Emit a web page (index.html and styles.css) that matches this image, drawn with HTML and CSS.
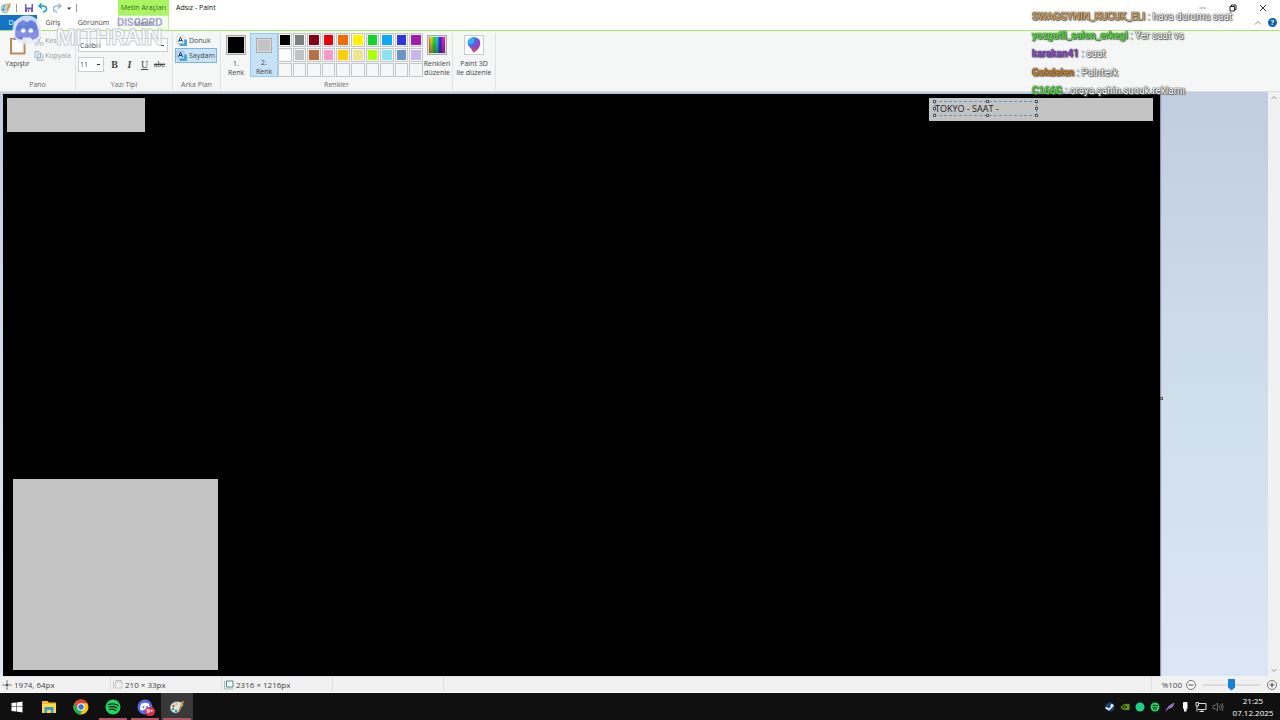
FILE: index.html
```html
<!DOCTYPE html>
<html lang="tr">
<head>
  <meta charset="UTF-8">
  <title>Adsız - Paint</title>
  <link rel="stylesheet" href="styles.css">
</head>
<body>
  <header class="titlebar">
    <div class="quick">
      <svg class="i12" viewBox="0 0 24 24"><path d="M3 8Q11 1 19 6Q23 10 17 14Q18 21 9 22Q0 20 3 8" fill="#b9d8dc" stroke="#6f8d92"/><circle cx="8" cy="9" r="2" fill="#4faf48"/><circle cx="7" cy="15" r="2" fill="#35b"/><path d="M12 16L19 2l3 1-7 14z" fill="#e39a31"/></svg>
      <span class="bar"></span>
      <button aria-label="Kaydet"><svg class="i10" viewBox="0 0 20 20"><path d="M2 2h16v16H2z" fill="#7557b5"/><path d="M5 2h10v7H5zM6 13h8v5H6z" fill="#fff"/><path d="M8 14h2v4H8z" fill="#7557b5"/></svg></button>
      <button aria-label="Geri al"><svg class="i10" viewBox="0 0 20 20"><path d="M7 1L2 6l6 5M2 6h8q7 0 7 6 0 5-7 6" fill="none" stroke="#1d9bd1" stroke-width="3"/></svg></button>
      <button aria-label="Yinele"><svg class="i10" viewBox="0 0 20 20"><path d="M13 1l5 5-6 5M18 6h-8q-7 0-7 6 0 5 7 6" fill="none" stroke="#9dbccc" stroke-width="3"/></svg></button>
      <button aria-label="Özelleştir"><svg class="i6" viewBox="0 0 10 10"><path d="M2 4h7L5 8z" fill="#333"/></svg></button>
      <span class="bar"></span>
    </div>
    <div class="context-tab">Metin Araçları</div>
    <h1>Adsız - Paint</h1>
    <div class="window-buttons">
      <button aria-label="Simge durumuna küçült"><svg class="i8" viewBox="0 0 16 16"><path d="M1 8h13" stroke="#999" stroke-width="2"/></svg></button>
      <button aria-label="Önceki boyut"><svg class="i8" viewBox="0 0 16 16"><path d="M2 5h9v9H2zM5 5V2h9v9h-3" fill="none" stroke="#222" stroke-width="2"/></svg></button>
      <button aria-label="Kapat"><svg class="i8" viewBox="0 0 16 16"><path d="M2 2l12 12M14 2L2 14" stroke="#333" stroke-width="2"/></svg></button>
    </div>
  </header>

  <nav class="tabs">
    <button class="file-tab">Dosya</button>
    <button>Giriş</button>
    <button>Görünüm</button>
    <button class="active">Metin</button>
    <div class="help">
      <svg class="i8" viewBox="0 0 16 16"><path d="M2 11l6-6 6 6" fill="none" stroke="#888" stroke-width="2"/></svg>
      <button class="help-btn" aria-label="Yardım">?</button>
    </div>
  </nav>

  <section class="ribbon">
    <div class="group pano">
      <div class="group-body">
        <button class="big paste">
          <svg class="i20" viewBox="0 0 40 40"><path d="M4 6h31v33H4z" fill="#b98a54"/><path d="M8 9h23v26H8z" fill="#fcfcfc"/><path d="M12 3h16v7H12z" fill="#8b929b"/></svg>
          <span>Yapıştır</span>
        </button>
        <div class="stack">
          <button class="small off"><svg class="i10" viewBox="0 0 20 20"><path d="M5 2l8 12M14 2L7 14" stroke="#b6bcc2" stroke-width="2"/><circle cx="5" cy="16" r="3" fill="none" stroke="#b6bcc2" stroke-width="2"/><circle cx="15" cy="16" r="3" fill="none" stroke="#b6bcc2" stroke-width="2"/></svg>Kes</button>
          <button class="small off"><svg class="i10" viewBox="0 0 20 20"><path d="M2 1h8l3 3v10H2zM7 6h8l3 3v10H7z" fill="#eef3f6" stroke="#a5b5c2" stroke-width="2"/><path d="M10 12h5M10 15h5" stroke="#a5b5c2"/></svg>Kopyala</button>
        </div>
      </div>
      <div class="group-name">Pano</div>
    </div>

    <div class="group font">
      <div class="group-body font-body">
        <select class="family" aria-label="Yazı tipi ailesi"><option>Calibri</option></select>
        <div class="row">
          <select class="size" aria-label="Yazı tipi boyutu"><option>11</option></select>
          <button class="b" aria-label="Kalın">B</button>
          <button class="i" aria-label="İtalik">I</button>
          <button class="u" aria-label="Altı çizili">U</button>
          <button class="s" aria-label="Üstü çizili">abc</button>
        </div>
      </div>
      <div class="group-name">Yazı Tipi</div>
    </div>

    <div class="group back">
      <div class="group-body stack">
        <button class="small"><svg class="i12" viewBox="0 0 24 24"><path d="M7 9h15v13H7z" fill="#46a8e0"/><path d="M2 2h14v15H2z" fill="#fff" stroke="#9aa8b3"/><path d="M5 14L9 4l4 10M6 11h6" fill="none" stroke="#1c3b6e" stroke-width="2"/></svg>Donuk</button>
        <button class="small on"><svg class="i12" viewBox="0 0 24 24"><path d="M7 9h15v13H7z" fill="#46a8e0"/><path d="M2 2h14v15H2z" fill="#bfe0f7" stroke="#7fa5c0"/><path d="M5 14L9 4l4 10M6 11h6" fill="none" stroke="#1c3b6e" stroke-width="2"/></svg>Saydam</button>
      </div>
      <div class="group-name">Arka Plan</div>
    </div>

    <div class="group colors">
      <div class="group-body">
        <button class="big pick"><span class="well black"></span><span>1.<br>Renk</span></button>
        <button class="big pick on"><span class="well gray"></span><span>2.<br>Renk</span></button>
        <div class="palette" id="palette"></div>
        <button class="big edit">
          <span class="well rainbow"></span><span>Renkleri<br>düzenle</span>
        </button>
      </div>
      <div class="group-name">Renkler</div>
    </div>

    <div class="group paint3d">
      <div class="group-body">
        <button class="big">
          <svg class="i20 framed" viewBox="0 0 40 40"><defs><linearGradient id="drop" x1="0" y1="0" x2="1" y2="1"><stop offset="0" stop-color="#18b7ef"/><stop offset=".5" stop-color="#6a55dc"/><stop offset="1" stop-color="#f0306b"/></linearGradient></defs><path d="M20 3C11 3 6 9 6 16c0 9 11 11 12 21 8-3 16-12 16-21 0-7-5-13-14-13z" fill="url(#drop)"/><path d="M16 25q5 2 7 7l-4 4q0-6-3-11" fill="#f2453a"/><path d="M20 3C11 3 6 9 6 16q8 4 14-2z" fill="#2fb4ee"/></svg>
          <span>Paint 3D<br>ile düzenle</span>
        </button>
      </div>
    </div>
  </section>

  <main class="work">
    <div class="canvas">
      <div class="shape top-left"></div>
      <div class="shape top-right"></div>
      <div class="shape bottom-left"></div>
      <div class="text-frame">
        <input type="text" value="TOKYO - SAAT -" aria-label="Metin">
        <i class="h nw"></i><i class="h n"></i><i class="h ne"></i>
        <i class="h w"></i><i class="h e"></i>
        <i class="h sw"></i><i class="h s"></i><i class="h se"></i>
      </div>
      <i class="h grip"></i>
    </div>
    <div class="scrollbar">
      <svg class="i8" viewBox="0 0 16 16"><path d="M3 10l5-5 5 5" fill="none" stroke="#999" stroke-width="2"/></svg>
      <svg class="i8" viewBox="0 0 16 16"><path d="M3 6l5 5 5-5" fill="none" stroke="#999" stroke-width="2"/></svg>
    </div>
  </main>

  <footer class="status">
    <div class="cell"><svg class="i10" viewBox="0 0 20 20"><path d="M10 1v18M1 10h18" stroke="#555" stroke-width="2" stroke-dasharray="4 3"/><path d="M10 6v8M6 10h8" stroke="#555" stroke-width="2"/></svg>1974, 64px</div>
    <div class="cell"><svg class="i10" viewBox="0 0 20 20"><path d="M5 4h13v12H5z" fill="none" stroke="#777" stroke-dasharray="2 1"/><path d="M1 3v14M5 1h13" stroke="#85898e"/></svg>210 × 33px</div>
    <div class="cell"><svg class="i10" viewBox="0 0 20 20"><path d="M5 2h13v12H5z" fill="#fff" stroke="#4b8994" stroke-width="2"/><path d="M1 2v16M1 18h17" stroke="#4b8994"/></svg>2316 × 1216px</div>
    <div class="cell"></div>
    <div class="zoom">
      <label for="zoom">%100</label>
      <button aria-label="Uzaklaştır"><svg class="i10" viewBox="0 0 20 20"><circle cx="10" cy="10" r="9" fill="#fafafa" stroke="#777" stroke-width="2"/><path d="M5 10h10" stroke="#444" stroke-width="2"/></svg></button>
      <input type="range" id="zoom" min="0" max="100" value="50">
      <button aria-label="Yakınlaştır"><svg class="i10" viewBox="0 0 20 20"><circle cx="10" cy="10" r="9" fill="#fafafa" stroke="#777" stroke-width="2"/><path d="M5 10h10M10 5v10" stroke="#444" stroke-width="2"/></svg></button>
    </div>
  </footer>

  <div class="taskbar">
    <button aria-label="Başlat"><svg class="i12" viewBox="0 0 24 24"><path d="M1 4l9-1v8H1zM11 3l12-2v10H11zM1 12h9v9l-9-1zM11 12h12v11l-12-2z" fill="#fff"/></svg></button>
    <button aria-label="Dosya Gezgini"><svg class="i16" viewBox="0 0 32 32"><path d="M2 4h11l3 3h14v21H2z" fill="#f5b91b"/><path d="M2 10h28v18H2z" fill="#ffd84c"/><path d="M7 16h18v12h-5v-6h-8v6H7z" fill="#3a9bc6"/></svg></button>
    <button aria-label="Chrome"><svg class="i16" viewBox="0 0 32 32"><circle cx="16" cy="16" r="15" fill="#fbc116"/><path d="M3 8.500A15 15 0 0 1 29 8.500H16z" fill="#e33b2e"/><path d="M3 8.500L10 20l6 3-3 7.700A15 15 0 0 1 3 8.500z" fill="#2da94f"/><path d="M3 8.500L10 20l6-11.500z" fill="#e33b2e"/><path d="M3 8.500A15 15 0 0 0 14 31l6-10-10-1z" fill="#2da94f"/><circle cx="16" cy="16" r="7.500" fill="#fff"/><circle cx="16" cy="16" r="5.500" fill="#3678dc"/></svg></button>
    <button class="running" aria-label="Spotify"><svg class="i16" viewBox="0 0 32 32"><circle cx="16" cy="16" r="15" fill="#1ed760"/><path d="M7 11q10-3 19 2M8 16q8-2 16 2M9 21q7-2 13 2" fill="none" stroke="#111" stroke-width="2.500" stroke-linecap="round"/></svg></button>
    <button class="running" aria-label="Discord">
      <svg class="i16" viewBox="0 0 32 32"><circle cx="16" cy="16" r="15" fill="#5865f2"/><path d="M9 9q7-3 14 0 4 7 3 12-3 3-6 2l-1-2h-6l-1 2q-3 1-6-2-1-5 3-12z" fill="#fff"/><circle cx="13" cy="16" r="2" fill="#5865f2"/><circle cx="20" cy="16" r="2" fill="#5865f2"/></svg>
      <span class="badge">9+</span>
    </button>
    <button class="running current" aria-label="Paint"><svg class="i16" viewBox="0 0 32 32"><path d="M3 15C4 8 14 3 25 7c5 3 3 8-2 10-4 2 1 4-3 8C14 31 1 27 3 15z" fill="#d5e8ed" stroke="#8fa9b0"/><circle cx="9" cy="14" r="2.500" fill="#e04c35"/><circle cx="15" cy="10" r="2.500" fill="#edb72e"/><circle cx="8" cy="20" r="2.500" fill="#42a64c"/><circle cx="14" cy="24" r="2.500" fill="#337fd0"/><path d="M18 24L27 3l3 2-9 20z" fill="#d98c35"/></svg></button>
    <div class="tray">
      <svg class="i10" viewBox="0 0 20 20"><circle cx="10" cy="10" r="9" fill="#14457b"/><path d="M1 11l7 4 7-7" fill="none" stroke="#fff" stroke-width="3"/><circle cx="14" cy="7" r="3" fill="#fff"/></svg>
      <svg class="i10" viewBox="0 0 20 20"><path d="M1 10q8-9 18-6v12H8Q3 15 1 10" fill="#5c9614"/><path d="M5 10q4-5 9 0-5 5-9 0" fill="none" stroke="#172407" stroke-width="2"/></svg>
      <svg class="i10" viewBox="0 0 20 20"><circle cx="10" cy="10" r="9" fill="#20cd85"/></svg>
      <svg class="i10" viewBox="0 0 20 20"><circle cx="10" cy="10" r="9" fill="#1ed760"/><path d="M5 7q6-2 11 1M5 11q5-2 9 1M6 14q4-1 7 1" fill="none" stroke="#113b1d" stroke-width="2"/></svg>
      <svg class="i10" viewBox="0 0 20 20"><path d="M1 19Q4 7 19 1q-2 11-13 13z" fill="#ad80e5"/><path d="M3 17L16 4" stroke="#4b2f72"/></svg>
      <svg class="i10" viewBox="0 0 20 20"><rect x="6" y="0" width="9" height="14" rx="2" fill="#fff"/><path d="M8 14h5v5H8z" fill="#fff"/></svg>
      <svg class="i12" viewBox="0 0 24 24"><path d="M6 5h16v12H6M14 17v4M9 21h9M2 3v7h5V3zM4 10v11" fill="none" stroke="#ddd" stroke-width="2"/></svg>
      <svg class="i12" viewBox="0 0 24 24"><path d="M2 9h4l5-5v16l-5-5H2zM14 9q2 3 0 6M17 6q4 6 0 12M20 4q5 8 0 16" fill="none" stroke="#bbb" stroke-width="1"/></svg>
      <div class="clock">21:25<br>07.12.2025</div>
    </div>
  </div>

  <!-- yayın katmanı -->
  <div class="brand">
    <svg viewBox="0 0 64 64"><circle cx="32" cy="32" r="31" fill="#e9edfb"/><path d="M14 16q7-5 12-5l2 3h8l2-3q6 0 12 5 9 16 7 30-7 6-14 7l-3-5H24l-3 5q-7-1-14-7-2-15 7-30z" fill="#7380e2"/><circle cx="24" cy="33" r="5" fill="#fff"/><circle cx="40" cy="33" r="5" fill="#fff"/></svg>
    <div class="brand-text"><span>DISCORD</span><strong>MITHRAIN</strong></div>
  </div>
  <div class="chat">
    <p><b class="tan">SWAGGYNIN_KUCUK_ELI</b> : hava durumu saat</p>
    <p><b class="lime">yozgatli_salon_erkegi</b> : Yer saat vs</p>
    <p><b class="purple">karakan41</b> : saat</p>
    <p><b class="orange">Gokdelen</b> : Painterk</p>
    <p><b class="lime">C166G</b> : oraya şahin sucuk reklamı</p>
  </div>

  <script>
    const colors = [
      '#000000', '#7f7f7f', '#880015', '#e6000c', '#f26b0a', '#fff200', '#12d62c', '#0cabf0', '#2e35dc', '#a31bac',
      '#ffffff', '#c3c3c3', '#b97040', '#f799c8', '#f8cf0a', '#efe48f', '#adff0c', '#8ce3f0', '#6994c6', '#c6b7e8'
    ];
    const palette = document.getElementById('palette');
    for (let i = 0; i < 30; i++) {
      const btn = document.createElement('button');
      btn.setAttribute('aria-label', 'Renk ' + (i + 1));
      btn.style.backgroundColor = colors[i] || '#f5f6f7';
      palette.appendChild(btn);
    }
  </script>
</body>
</html>
```
FILE: styles.css
```css
* {
  box-sizing: border-box;
}
body {
  margin: 0;
  height: 100vh;
  display: flex;
  flex-direction: column;
  position: relative;
  overflow: hidden;
  font: 7px/9px "Open Sans", "Noto Sans", sans-serif;
  color: #444;
  background: #fff;
}
button, input, select {
  font: inherit;
  color: inherit;
  border: none;
  padding: 0;
  margin: 0;
  background: none;
}
svg {
  display: block;
  flex: none;
}
.i6 { width: 6px; height: 6px; }
.i8 { width: 8px; height: 8px; }
.i10 { width: 10px; height: 10px; }
.i12 { width: 12px; height: 12px; }
.i16 { width: 16px; height: 16px; }
.i20 { width: 20px; height: 20px; }

/* başlık */
.titlebar {
  display: flex;
  align-items: center;
  height: 15px;
}
.quick {
  display: flex;
  align-items: center;
  gap: 4px;
  width: 118px;
}
.bar {
  width: 1px;
  height: 8px;
  margin-right: 3px;
  background: #999;
}
.context-tab {
  width: 51px;
  line-height: 15px;
  text-align: center;
  background: #aaf562;
  color: #3f6b1c;
}
.titlebar h1 {
  flex: 1;
  margin: 0 0 0 7px;
  font-size: 7px;
  font-weight: normal;
  color: #111;
}
.window-buttons {
  display: flex;
  gap: 22px;
  padding-right: 13px;
}

/* sekmeler */
.tabs {
  display: flex;
  height: 16px;
  border-bottom: 1px solid #a5e56a;
}
.tabs > button {
  width: 32px;
}
.tabs > .file-tab {
  width: 37px;
  background: #1474c4;
  color: #fff;
}
.tabs > button:nth-child(3) {
  width: 49px;
}
.tabs > .active {
  width: 51px;
  background: #f3fbea;
  border: 1px solid #c5eca0;
  border-bottom: none;
}
.help {
  display: flex;
  align-items: center;
  gap: 6px;
  margin-left: auto;
  padding-right: 3px;
}
.help-btn {
  width: 9px;
  height: 9px;
  border-radius: 50%;
  background: #0c62b8;
  color: #fff;
  font-weight: bold;
}

/* şerit */
.ribbon {
  display: flex;
  height: 61px;
  padding: 2px 0 1px;
  background: #f5f7f7;
  border-bottom: 1px solid #d9dde3;
}
.group {
  display: flex;
  flex-direction: column;
  border-right: 1px solid #e0e3e5;
}
.group-body {
  flex: 1;
  display: flex;
}
.group-name {
  text-align: center;
  line-height: 10px;
  color: #666;
}
.pano { width: 76px; }
.font { width: 97px; }
.back { width: 48px; }
.colors { width: 232px; }
.paint3d { width: 43px; }
.big {
  display: flex;
  flex-direction: column;
  align-items: center;
  gap: 4px;
  width: 30px;
  height: 44px;
  padding-top: 2px;
  white-space: nowrap;
}
.paste {
  width: 33px;
  padding-left: 2px;
}
.stack {
  display: flex;
  flex-direction: column;
}
.small {
  display: flex;
  align-items: center;
  gap: 1px;
  height: 15px;
  border: 1px solid transparent;
}
.off {
  color: #999;
}
.small.on {
  background: #c9e3f8;
  border-color: #7eb6e2;
}
.back .stack {
  padding: 0 3px 0 2px;
}
.font-body {
  flex-direction: column;
  gap: 5px;
  padding: 5px 4px 0 2px;
}
select {
  appearance: none;
  border: 1px solid #c9cccf;
  background: linear-gradient(#333, #333) right 3px center / 3px 1px no-repeat #fff;
}
.family {
  width: 90px;
  height: 14px;
  padding-left: 1px;
}
.size {
  width: 26px;
  height: 15px;
  margin-right: 3px;
  padding-left: 1px;
}
.row {
  display: flex;
}
.row button {
  width: 15px;
  font: 10px "Liberation Serif", serif;
}
.row .b { font-weight: bold; }
.row .i { font-style: italic; font-weight: bold; }
.row .u { text-decoration: underline; }
.row .s {
  font-size: 8px;
  text-decoration: line-through;
}
.pick {
  width: 28px;
}
.colors .group-body {
  padding-left: 1px;
}
.pick.on {
  background: #c5e2f7;
  border: 1px solid #9bcaf0;
}
.well {
  width: 20px;
  height: 20px;
  border: 1px solid #aaa;
  outline: 1px solid #ddd;
  outline-offset: -2px;
}
.black { background: #000; }
.gray {
  width: 16px;
  height: 16px;
  margin: 2px 0 1px;
  background: #c3c3c3;
}
.rainbow {
  background: linear-gradient(transparent, #2228), linear-gradient(90deg, #e22, #ee2, #2d2, #2dd, #22e, #e2d, #e22);
}
.framed {
  background: #fff;
  border: 1px solid #ccc;
}
.palette {
  display: grid;
  grid-template-columns: repeat(10, 1fr);
  grid-auto-rows: 14px;
  gap: 1px;
  width: 145px;
}
.palette button {
  border: 1px solid #c4c6c8;
  box-shadow: inset 0 0 0 1px #f5f6f7;
}
.edit {
  width: 28px;
}
.paint3d .big {
  width: 42px;
}

/* çalışma alanı */
.work {
  flex: 1;
  display: flex;
  padding: 2px 0 0 3px;
  background: linear-gradient(#c1cde0, #d0dfec 55%, #dbe6f4);
}
.canvas {
  flex: 1;
  position: relative;
  margin-right: 108px;
  background: #000;
  box-shadow: 1px 0 1px #8d96b0;
}
.shape {
  position: absolute;
  background: #c3c3c3;
}
.top-left {
  left: 4px;
  top: 4px;
  width: 138px;
  height: 34px;
}
.top-right {
  right: 7px;
  top: 4px;
  width: 224px;
  height: 23px;
}
.bottom-left {
  left: 10px;
  bottom: 6px;
  width: 205px;
  height: 191px;
}
.text-frame {
  position: absolute;
  right: 123px;
  top: 7px;
  width: 103px;
  height: 15px;
  border: 1px dashed #5a9bc6;
}
.text-frame input {
  display: block;
  width: 100%;
  height: 13px;
  font: 9px/13px "Open Sans", sans-serif;
  color: #222;
}
.h {
  position: absolute;
  width: 3px;
  height: 3px;
  background: #fff;
  border: 1px solid #555;
}
.nw, .n, .ne { top: -2px; }
.sw, .s, .se { bottom: -2px; }
.w, .e { top: 5px; }
.nw, .w, .sw { left: -2px; }
.ne, .e, .se { right: -2px; }
.n, .s { left: 50%; }
.grip {
  right: -3px;
  top: 52%;
}
.scrollbar {
  display: flex;
  flex-direction: column;
  justify-content: space-between;
  align-items: center;
  width: 12px;
  margin-top: -2px;
  padding: 2px 0;
  background: #f0f1f2;
}

/* durum çubuğu */
.status {
  display: flex;
  height: 17px;
  font-size: 8px;
  background: #f1f1f1;
  border-bottom: 1px solid #fff;
}
.cell {
  display: flex;
  align-items: center;
  gap: 2px;
  width: 111px;
  padding: 1px 0 0 2px;
  border-right: 1px solid #e0e0e0;
}
.zoom {
  display: flex;
  align-items: center;
  gap: 4px;
  margin-left: auto;
  padding: 1px 3px 0 10px;
  border-left: 1px solid #e0e0e0;
}
.zoom input {
  appearance: none;
  width: 57px;
  height: 12px;
  margin: 0 3px;
  background: linear-gradient(#dcdcdc, #dcdcdc) center / 100% 2px no-repeat;
}
.zoom input::-webkit-slider-thumb {
  appearance: none;
  width: 7px;
  height: 12px;
  background: #1681d8;
  clip-path: polygon(0 0, 100% 0, 100% 75%, 50% 100%, 0 75%);
}

/* görev çubuğu */
.taskbar {
  display: flex;
  height: 27px;
  padding-left: 1px;
  background: #101010;
  color: #fff;
}
.taskbar > button {
  display: flex;
  align-items: center;
  justify-content: center;
  position: relative;
  width: 32px;
}
.running::after {
  content: "";
  position: absolute;
  left: 2px;
  right: 2px;
  bottom: 0;
  height: 2px;
  background: #b25567;
}
.current {
  background: #393939;
}
.badge {
  position: absolute;
  right: 6px;
  bottom: 4px;
  width: 10px;
  border-radius: 5px;
  background: #d83248;
  font-size: 6px;
  font-weight: bold;
}
.tray {
  display: flex;
  align-items: center;
  gap: 5px;
  margin-left: auto;
  padding-right: 6px;
}
.clock {
  width: 42px;
  margin-left: 3px;
  font-size: 8px;
  line-height: 12px;
  text-align: center;
  white-space: nowrap;
}

/* yayın katmanı */
.brand {
  display: flex;
  position: absolute;
  left: 12px;
  top: 15px;
  opacity: .85;
  pointer-events: none;
}
.brand svg {
  width: 30px;
  height: 30px;
}
.brand-text {
  display: flex;
  flex-direction: column;
  margin-left: 14px;
}
.brand-text span {
  align-self: flex-end;
  font: bold 10px/15px "Inter", sans-serif;
  color: #9b91d8;
}
.brand-text strong {
  font: bold 21px/16px "Inter", sans-serif;
  color: #fff;
  -webkit-text-stroke: 1px #c4c4d2;
}
.chat {
  display: flex;
  flex-direction: column;
  justify-content: space-between;
  position: absolute;
  left: calc(100% - 248px);
  top: 8px;
  height: 92px;
  font: 10px/18px Roboto, sans-serif;
  color: #fff;
  pointer-events: none;
}
.chat p {
  margin: 0;
  white-space: nowrap;
  text-shadow: 0 0 1px #444, 0 0 1px #444, 1px 1px 1px #666, 0 0 2px #777;
}
.chat b {
  font-weight: 500;
}
.tan { color: #dba45c; }
.lime { color: #4be631; }
.purple { color: #8c3fd0; }
.orange { color: #d27e1e; }
```
